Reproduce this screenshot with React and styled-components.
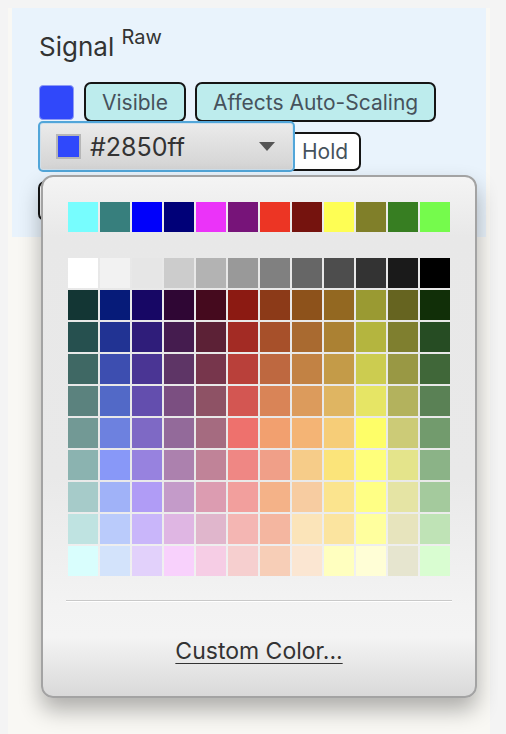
import React from "react";
import styled, { createGlobalStyle } from "styled-components";

const GlobalStyle = createGlobalStyle`
  body {
    margin: 8px;
    background: #f4f4f4;
    font-family: "Inter", "Liberation Sans", sans-serif;
  }
`;

const topColors = [
  "#77fdfe", "#377f7d", "#0000fb", "#000078", "#eb33f9", "#771479",
  "#ec3524", "#75130e", "#fefe54", "#807f29", "#377e22", "#75fb4c",
];

const gridColors = [
  ["#ffffff", "#f2f2f2", "#e6e6e6", "#cccccc", "#b3b3b3", "#999999", "#808080", "#666666", "#4d4d4d", "#333333", "#1a1a1a", "#000000"],
  ["#133634", "#061b79", "#170765", "#2f0634", "#450a1e", "#8c1a12", "#8c3a18", "#8d521b", "#936821", "#9a9a32", "#666420", "#112f08"],
  ["#26504f", "#213393", "#2f1d7a", "#451c4f", "#5c2136", "#a32b24", "#a7502a", "#a96a30", "#ab8133", "#b4b53f", "#7f7f2f", "#264c23"],
  ["#3f6864", "#3d4eb0", "#4a3594", "#5e3566", "#77364c", "#b9403a", "#be6840", "#c28244", "#c49b48", "#cccc50", "#999844", "#406739"],
  ["#5b827e", "#5269c7", "#634eae", "#7b4f81", "#8e5265", "#d35652", "#d98457", "#dc9b5c", "#dfb562", "#e6e565", "#b3b25d", "#5a8155"],
  ["#729995", "#6d81df", "#7e69c5", "#936a9a", "#a56b80", "#ee716d", "#f2a06f", "#f4b475", "#f6cd78", "#fefe68", "#cccb77", "#729b6d"],
  ["#8bb3b0", "#8898f8", "#9782df", "#ac81ae", "#c08398", "#ef8784", "#f09f88", "#f6cc89", "#fbe47a", "#ffff7b", "#e4e48b", "#8bb387"],
  ["#a6cbc9", "#a0b2f8", "#b09cf6", "#c49bc9", "#dc9cb1", "#f29f9d", "#f4b288", "#f7cca1", "#fbe48e", "#ffff85", "#e5e4a4", "#a4ca9d"],
  ["#bfe3e1", "#bacbfb", "#c9b6fa", "#dfb6e3", "#e0b6cc", "#f4b6b3", "#f4b6a0", "#fbe4b9", "#fbe49f", "#ffff9e", "#e7e4bd", "#bfe3b6"],
  ["#d9fefd", "#d3e3fb", "#e2d1fb", "#f8d1fc", "#f6cde5", "#f6cfcf", "#f7ceb7", "#fbe6d2", "#ffffbf", "#fffed6", "#e6e5cf", "#d9fdd1"],
];

const Container = styled.div`
  position: relative;
  width: 482px;
  min-height: calc(100vh - 8px);
  background: #f9f8f4;
`;

const Panel = styled.div`
  margin: 0 4px;
  padding: 23px 27px 16px;
  background: #e9f3fc;
`;

const Title = styled.h2`
  margin: 0 0 19px;
  font-size: 26px;
  font-weight: 400;
  color: #333;
  line-height: 32px;
`;

const Sup = styled.span`
  font-size: 20px;
  line-height: 0;
  vertical-align: 12px;
`;

const Row = styled.div`
  display: flex;
  align-items: ${(p) => p.align || "center"};
  gap: ${(p) => p.gap || "9px"};
  margin-top: ${(p) => p.top || 0};
`;

const Swatch = styled.div`
  width: 35px;
  height: 35px;
  margin-right: 1px;
  box-sizing: border-box;
  border: 1px solid #8e9bf4;
  border-radius: 4px;
  background: ${(p) => p.color};
`;

const Toggle = styled.button`
  height: ${(p) => p.h || "40px"};
  padding: ${(p) => p.pad || "0 16px"};
  margin-left: ${(p) => p.shift || 0};
  margin-bottom: ${(p) => p.drop || 0};
  box-sizing: border-box;
  border: 2px solid #151515;
  border-radius: 7px;
  background: ${(p) => (p.active ? "#bdeced" : "#ffffff")};
  color: #46525c;
  font-family: inherit;
  font-size: 21px;
`;

const Select = styled.div`
  position: relative;
  z-index: 1;
  display: flex;
  align-items: center;
  width: 257px;
  height: 51px;
  margin-left: -1px;
  padding: 0 18px 0 16px;
  box-sizing: border-box;
  border: 2px solid #52a6d9;
  border-radius: 5px;
  box-shadow: inset 0 0 0 1px #cfe0ec;
  background: linear-gradient(#ebebeb, #d3d3d3);
  color: #333;
  font-size: 25px;
`;

const MiniSwatch = styled.span`
  width: 25px;
  height: 25px;
  margin-right: 9px;
  box-sizing: border-box;
  border: 2px solid #b6b6b6;
  background: ${(p) => p.color};
`;

const Arrow = styled.span`
  margin-left: auto;
  width: 0;
  height: 0;
  border-left: 8px solid transparent;
  border-right: 8px solid transparent;
  border-top: 9px solid #555;
`;

const Popup = styled.div`
  position: absolute;
  z-index: 2;
  left: 33px;
  top: 167px;
  width: 436px;
  height: 523px;
  box-sizing: border-box;
  padding: 25px;
  border: 2px solid #a3a3a3;
  border-radius: 12px;
  background: linear-gradient(
    #f4f4f4 0,
    #e8e8e8 60px,
    #e9e9e9 300px,
    #f3f3f3 430px,
    #f4f4f4 460px,
    #d9d9d9 100%
  );
  box-shadow: 0 12px 22px rgba(0, 0, 0, 0.3);
`;

const ColorGrid = styled.div`
  display: grid;
  grid-template-columns: repeat(12, 30px);
  grid-auto-rows: 30px;
  gap: 2px;
  margin-top: ${(p) => p.top || 0};
`;

const Cell = styled.div`
  background: ${(p) => p.color};
`;

const Divider = styled.hr`
  margin: 24px -2px 0;
  border: 0;
  border-top: 1px solid #c9c9c9;
  border-bottom: 1px solid #ffffff;
`;

const CustomLink = styled.div`
  margin-top: 35px;
  text-align: center;
  font-size: 23px;
  color: #333;
  text-decoration: underline;
  text-underline-offset: 4px;
  text-decoration-thickness: 1px;
`;

export default function App() {
  return (
    <Container>
      <GlobalStyle />
      <Panel>
        <Title>
          Signal <Sup>Raw</Sup>
        </Title>
        <Row>
          <Swatch color="#3048fa" />
          <Toggle active>Visible</Toggle>
          <Toggle active>Affects Auto-Scaling</Toggle>
        </Row>
        <Row align="flex-end" top="-1px" gap="0">
          <Select>
            <MiniSwatch color="#2f48fc" />
            #2850ff
            <Arrow />
          </Select>
          <Toggle h="39px" shift="-10px" drop="1px" pad="0 11px 0 15px">
            Hold
          </Toggle>
        </Row>
        <Row top="9px">
          <Toggle shift="-1px">Remove</Toggle>
        </Row>
      </Panel>
      <Popup>
        <ColorGrid>
          {topColors.map((c) => (
            <Cell key={c} color={c} />
          ))}
        </ColorGrid>
        <ColorGrid top="26px">
          {gridColors.flat().map((c, i) => (
            <Cell key={i} color={c} />
          ))}
        </ColorGrid>
        <Divider />
        <CustomLink>Custom Color...</CustomLink>
      </Popup>
    </Container>
  );
}
